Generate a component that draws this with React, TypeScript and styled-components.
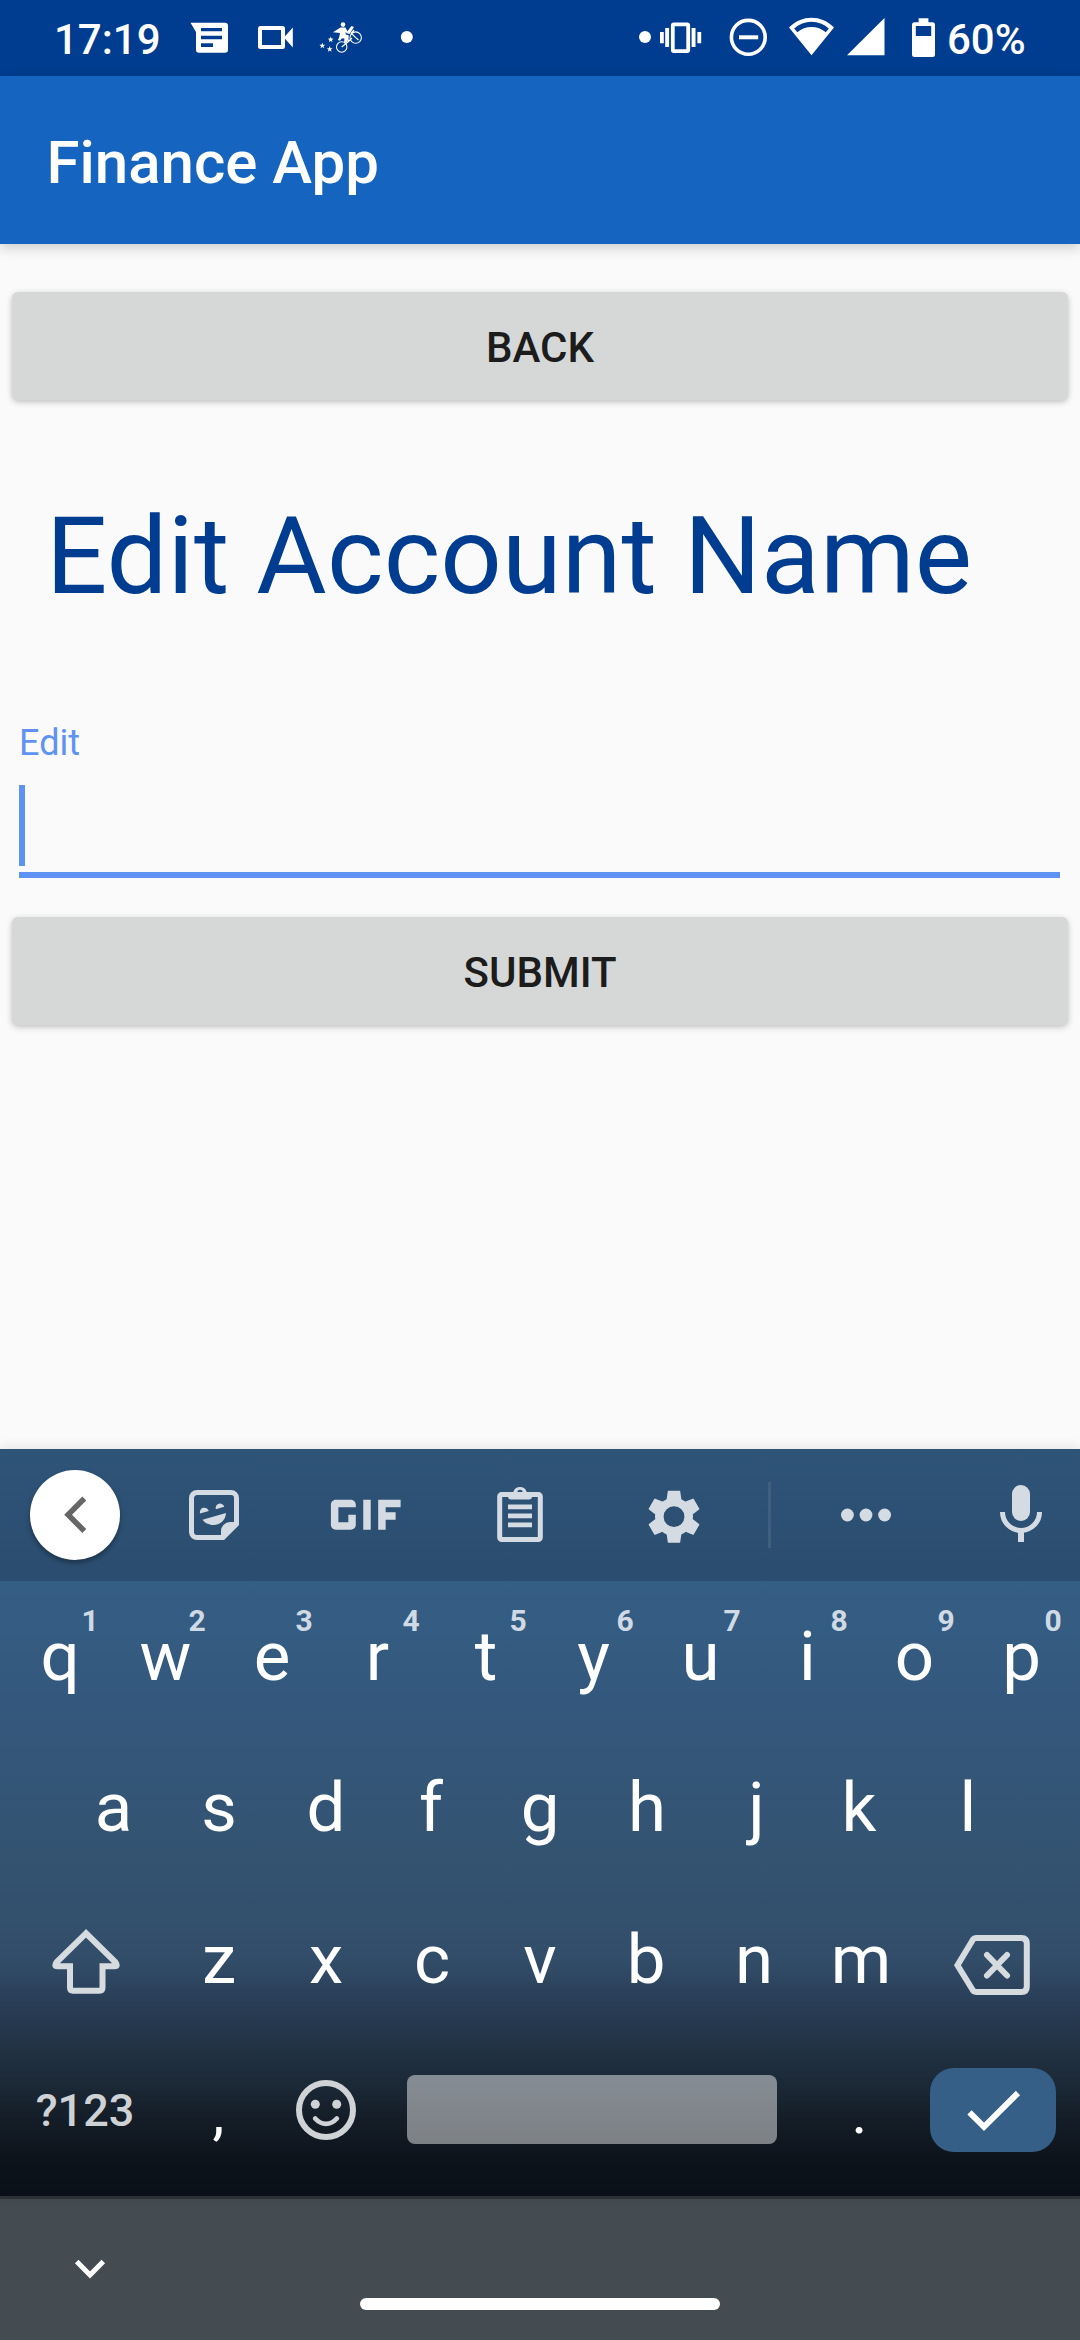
import React from "react";
import styled, { createGlobalStyle } from "styled-components";
import { MdGif } from "react-icons/md";

const GlobalStyle = createGlobalStyle`
  html, body { margin: 0; padding: 0; }
  body { font-family: Roboto, "Noto Sans", sans-serif; background: #fafafa; }
  *, *::before, *::after { box-sizing: border-box; }
  svg { display: block; flex: none; }
  button { font-family: inherit; border: 0; margin: 0; padding: 0; background: none; }
`;

const Screen = styled.div`
  display: flex;
  flex-direction: column;
  width: 1080px;
  height: 2340px;
  overflow: hidden;
  background: #fafafa;
`;

const StatusBar = styled.header`
  display: flex;
  justify-content: space-between;
  align-items: center;
  height: 76px;
  flex: none;
  padding: 0 54px;
  background: #003c8f;
  color: #fff;
`;

const StatusGroup = styled.div`
  display: flex;
  align-items: center;
  height: 76px;
`;

const StatusText = styled.span<{ $width: number }>`
  width: ${(p) => p.$width}px;
  padding-top: 3px;
  font-size: 42px;
  font-weight: 500;
  line-height: 50px;
  white-space: nowrap;
`;

const AppBar = styled.div`
  display: flex;
  align-items: center;
  flex: none;
  height: 168px;
  padding: 5px 46.5px 0;
  background: #1565c0;
  color: #fff;
  box-shadow: 0 4px 12px rgba(0, 0, 0, 0.18);
  z-index: 1;
`;

const AppTitle = styled.h1`
  margin: 0;
  font-size: 60px;
  font-weight: 500;
  line-height: 72px;
`;

const Content = styled.main`
  display: flex;
  flex-direction: column;
  flex: none;
  height: 1205px;
  padding: 48px 12px 0;
`;

const RaisedButton = styled.button`
  flex: none;
  height: 108px;
  padding-top: 3px;
  border-radius: 6px;
  background: #d6d8d7;
  box-shadow: 0 2px 6px rgba(0, 0, 0, 0.24);
  color: #1c1c1c;
  font-size: 42px;
  font-weight: 500;
  line-height: 50px;
`;

const Heading = styled.h2`
  margin: 92px 0 0;
  padding-left: 34px;
  color: #003c8f;
  font-size: 108px;
  font-weight: 400;
  line-height: 128px;
  letter-spacing: 0.14px;
  white-space: nowrap;
`;

const Field = styled.div`
  display: flex;
  flex-direction: column;
  margin: 102px 8px 39px 7px;
  height: 156px;
  border-bottom: 6px solid #5e92f3;
`;

const FieldLabel = styled.label`
  font-size: 36px;
  line-height: 42px;
  color: #5e92f3;
`;

const Caret = styled.span`
  width: 6px;
  height: 81px;
  margin-top: 21px;
  background: #5e92f3;
`;

const Keyboard = styled.section`
  display: flex;
  flex-direction: column;
  flex: none;
  height: 747px;
  box-shadow: 0 0 12px rgba(0, 0, 0, 0.12);
  z-index: 1;
`;

const Toolbar = styled.div`
  display: flex;
  align-items: center;
  height: 132px;
  flex: none;
  padding-left: 30px;
  background: linear-gradient(#2e5478, #2b4d6f);
  color: #d5dbe3;
`;

const CollapseButton = styled.button`
  display: flex;
  align-items: center;
  justify-content: center;
  width: 90px;
  height: 90px;
  margin-right: 65px;
  border-radius: 50%;
  background: #fff;
  box-shadow: 0 3px 5px rgba(0, 0, 0, 0.35);
`;

const ToolSlot = styled.div<{ $width: number; $lead?: number }>`
  display: flex;
  align-items: center;
  justify-content: center;
  height: 132px;
  width: ${(p) => p.$width}px;
  padding-left: ${(p) => p.$lead ?? 0}px;
`;

const ToolDivider = styled.div`
  width: 3px;
  height: 66px;
  background: #3f5f7d;
`;

const Keys = styled.div`
  display: flex;
  flex-direction: column;
  height: 615px;
  padding: 0 5px;
  background: linear-gradient(
    #355e85 0,
    #34587d 119px,
    #33526f 299px,
    #324d69 379px,
    #293d56 423px,
    #233447 459px,
    #1c2a38 499px,
    #141d27 539px,
    #0d131b 579px,
    #0a1017 615px
  );
`;

const KeyRow = styled.div<{ $height: number; $top?: number }>`
  display: flex;
  justify-content: center;
  align-items: center;
  flex: none;
  height: ${(p) => p.$height}px;
  padding-top: ${(p) => p.$top ?? 0}px;
`;

const LetterKey = styled.button<{ $nudge: number }>`
  position: relative;
  width: 107px;
  height: 100%;
  color: #fff;
  font-size: 69px;
  line-height: 80px;
  text-align: center;
  text-indent: ${(p) => p.$nudge * 2}px;
`;

const KeyHint = styled.sup`
  position: absolute;
  top: 22px;
  left: 70px;
  width: 30px;
  color: #d0dae5;
  font-size: 30px;
  font-weight: 700;
  line-height: 36px;
  text-align: center;
  text-indent: 0;
`;

const WideKey = styled.button<{ $pad: string }>`
  display: flex;
  align-items: center;
  justify-content: center;
  width: 160.5px;
  height: 100%;
  padding: ${(p) => p.$pad};
`;

const BottomRow = styled.div`
  display: flex;
  align-items: center;
  height: 161px;
  padding-bottom: 12px;
`;

const SymbolsKey = styled.button`
  width: 160px;
  padding-top: 2px;
  color: #cfd2d5;
  font-size: 45px;
  font-weight: 500;
  line-height: 54px;
`;

const PunctuationKey = styled.button`
  width: 107px;
  padding-top: 6px;
  color: #fff;
  font-size: 60px;
  line-height: 80px;
`;

const EmojiKey = styled.button`
  display: flex;
  justify-content: center;
  width: 107px;
`;

const SpaceKey = styled.button`
  width: 370px;
  height: 69px;
  margin: 0 29px 0 28px;
  border-radius: 8px;
  background: rgba(255, 255, 255, 0.46);
`;

const EnterKey = styled.button`
  display: flex;
  width: 126px;
  height: 84px;
  margin-left: 17px;
  border-radius: 24px;
  background: #355f87;
`;

const NavBar = styled.footer`
  display: flex;
  flex: none;
  height: 144px;
  border-top: 3px solid #2e3437;
  background: #454c51;
`;

const NavSide = styled.div`
  display: flex;
  width: 360px;
  padding: 50px 0 0 70px;
`;

const HomePill = styled.div`
  width: 360px;
  height: 12px;
  margin-top: 99px;
  border-radius: 6px;
  background: #fff;
`;

const starPoints = (cx: number, cy: number, r: number) =>
  Array.from({ length: 10 }, (_, i) => {
    const a = (Math.PI / 5) * i - Math.PI / 2;
    const d = i % 2 ? r * 0.42 : r;
    return `${cx + Math.cos(a) * d},${cy + Math.sin(a) * d}`;
  }).join(" ");

const NotificationIcons = () => (
  <svg width="240" height="76" viewBox="180 0 240 76" fill="#fff">
    <path
      fillRule="evenodd"
      d="M190.5 22.7H225a3 3 0 0 1 3 3V49.7a3 3 0 0 1-3 3H199a3 3 0 0 1-3-3V32ZM201 28v3.3h21V28ZM201 35.7v3.6h21v-3.6ZM201 43.3V47h12v-3.7Z"
    />
    <rect x="260" y="28" width="23" height="19" rx="0.5" fill="none" stroke="#fff" strokeWidth="4" />
    <path d="M284 37.5 292.8 27.5V47.5Z" />
    <circle cx="341.7" cy="47" r="5.2" fill="none" stroke="#fff" strokeWidth="1.1" />
    <circle cx="355.7" cy="37.6" r="5.7" fill="none" stroke="#fff" strokeWidth="1.1" />
    <circle cx="343" cy="24.6" r="2.3" />
    <path d="M340.5 27.5H345.5L348 32.5H345.5L345.8 34.5 349 35.5 347.2 42.5 344 43 344.4 38.5 339 38.2 340 33 333 32.3Z" />
    <path d="M346 33 351.5 26 354 27 349.5 34ZM350.5 33 353.5 29.5 354.5 30.8 351 35Z" />
    <path d="M341.7 47 348.5 41.5 347 35M348.5 41.5 352 38M355.7 37.6 351.5 33.5M355.7 37.6 358.5 40" fill="none" stroke="#fff" strokeWidth="1.2" />
    <path d="M339.5 37 337.8 40 340 40.8 342 38Z" />
    <polygon points={starPoints(322.3, 45.8, 3.1)} />
    <polygon points={starPoints(330.7, 39.6, 3.1)} />
    <polygon points={starPoints(329.7, 49.2, 3.1)} />
    <circle cx="406.8" cy="37" r="6" />
  </svg>
);

const SystemIcons = () => (
  <svg width="311" height="76" viewBox="636 0 311 76" fill="#fff">
    <circle cx="645" cy="37" r="6" />
    <rect x="672.8" y="24.3" width="15.4" height="26.8" rx="1" fill="none" stroke="#fff" strokeWidth="3.8" />
    <path d="M660 32h3.8v11.3H660ZM665.2 28h3.9v19h-3.9ZM691.6 28h3.9v19h-3.9ZM697.4 32h3.8v11.3h-3.8Z" />
    <circle cx="748.3" cy="37.3" r="16.9" fill="none" stroke="#fff" strokeWidth="3.6" />
    <path d="M739 35.3h19.2v4H739Z" />
    <path
      fillRule="evenodd"
      d="M811.5 55.3 789 27.6C795.5 21 803 17.7 811.5 17.7S827.5 21 834 27.6L811.5 55.3ZM797.3 32.2C801.5 28.9 806 27.1 811.5 27.1S821.5 28.9 825.8 32.2L828.8 28.4C823.8 24.1 818 21.7 811.5 21.7S799.2 24.1 794.2 28.4Z"
    />
    <path d="M847 55.3 884.5 18V55.3Z" />
    <path
      fillRule="evenodd"
      d="M918.6 18.3H928.4V22.3H932.5A2.5 2.5 0 0 1 935 24.8V54.5A2.5 2.5 0 0 1 932.5 57H914.5A2.5 2.5 0 0 1 912 54.5V24.8A2.5 2.5 0 0 1 914.5 22.3H918.6ZM915.8 26V36H931.2V26Z"
    />
  </svg>
);

const StickerIcon = () => (
  <svg width="50" height="50" viewBox="0 0 50 50" fill="currentColor">
    <path d="M8 2.500H42a5.500 5.500 0 0 1 5.500 5.500V34L34 47.500H8A5.500 5.500 0 0 1 2.500 42V8A5.500 5.500 0 0 1 8 2.500Z" fill="none" stroke="currentColor" strokeWidth="5" />
    <path d="M50 34.500 34.500 50H32V41a9 9 0 0 1 9-9H50Z" />
    <path d="M11 23.500A4.300 4.300 0 1 1 19.800 21ZM26.800 19.200A4.300 4.300 0 1 1 35.300 16.800ZM13.500 29.700 37 23C36.500 31 30.500 35 24.500 35 19.500 35 15.500 32.500 13.500 29.700Z" />
  </svg>
);

const ClipboardIcon = () => (
  <svg width="46" height="60" viewBox="0 0 46 60" fill="currentColor">
    <rect x="2.700" y="9.500" width="40.600" height="45" rx="2" fill="none" stroke="currentColor" strokeWidth="5" />
    <path fillRule="evenodd" d="M11 7H16.300a7 7 0 0 1 13.400 0H35V11.500a3 3 0 0 1-3 3H14a3 3 0 0 1-3-3ZM23 4.700a2.700 2.700 0 1 0 0 5.400 2.700 2.700 0 0 0 0-5.400Z" />
    <path d="M11 19.500h24v4.700H11ZM11 28.500h24v4.700H11ZM11 37.500h24v4.700H11Z" />
  </svg>
);

const GearIcon = () => (
  <svg width="54" height="56" viewBox="-27 -29.700 54 56" stroke="currentColor" strokeLinejoin="round">
    <circle r="14.700" fill="none" strokeWidth="8.600" />
    {[0, 60, 120, 180, 240, 300].map((a) => (
      <path key={a} transform={`rotate(${a})`} fill="currentColor" strokeWidth="1.500" d="M-5.500-25.200H5.500L6.600-17.500H-6.600Z" />
    ))}
  </svg>
);

const MoreIcon = () => (
  <svg width="52" height="14" viewBox="-26 -7 52 14" fill="currentColor">
    <circle cx="-18.600" r="6.400" />
    <circle r="6.400" />
    <circle cx="18.600" r="6.400" />
  </svg>
);

const MicIcon = () => (
  <svg width="42" height="60" viewBox="0 0 42 60" fill="none" stroke="currentColor">
    <rect x="12" y="0" width="18" height="36" rx="9" fill="currentColor" stroke="none" />
    <path d="M2.500 27A18.500 18.500 0 0 0 39.500 27" strokeWidth="5" />
    <path d="M21 45V57" strokeWidth="6" />
  </svg>
);

const ShiftIcon = () => (
  <svg width="70" height="68" viewBox="51 1928 70 68" fill="none" stroke="#d6dbe0" strokeWidth="6">
    <path d="M86 1933.300 56.500 1962.300Q53.500 1966.300 57.500 1966.300H70V1987.500Q70 1990.700 73 1990.700H99.500Q102.500 1990.700 102.500 1987.500V1966.300H114.500Q118.500 1966.300 115.500 1962.300Z" />
  </svg>
);

const BackspaceIcon = () => (
  <svg width="78" height="62" viewBox="953 1934 78 62" fill="none" stroke="#d6dbe0" strokeWidth="6">
    <path d="M976 1938H1021.500Q1026.800 1938 1026.800 1943.500V1986.500Q1026.800 1992 1021.500 1992H976Q974 1992 973 1990.500L957.500 1965.200 973 1939.500Q974 1938 976 1938Z" />
    <path d="M987 1955 1007 1975.500M1007 1955 987 1975.500" strokeLinecap="round" />
  </svg>
);

const EmojiIcon = () => (
  <svg width="62" height="62" viewBox="-31 -31 62 62" fill="none" stroke="#d0d3d6">
    <circle r="27" strokeWidth="6" />
    <circle cx="-10.700" cy="-5.700" r="4.500" fill="#d0d3d6" stroke="none" />
    <circle cx="10.700" cy="-5.700" r="4.500" fill="#d0d3d6" stroke="none" />
    <path d="M-10.800 8.500Q-6 13.800 0 13.800T10.800 8.500" strokeWidth="4.800" strokeLinecap="round" />
  </svg>
);

const numberRow = "qwertyuiop".split("");
const homeRow = "asdfghjkl".split("");
const lowerRow = "zxcvbnm".split("");

const opticalShift: Record<string, number> = {
  q: 1.5, e: -0.5, r: -2, t: -0.5, a: 1.5, f: -2, j: 2.5, k: -2, c: -1, b: -1,
};

const Letter = ({ char, hint }: { char: string; hint?: number }) => (
  <LetterKey $nudge={opticalShift[char] ?? 0}>
    {char}
    {hint !== undefined && <KeyHint>{hint}</KeyHint>}
  </LetterKey>
);

export default function App() {
  return (
    <Screen>
      <GlobalStyle />
      <StatusBar>
        <StatusGroup>
          <StatusText $width={126}>17:19</StatusText>
          <NotificationIcons />
        </StatusGroup>
        <StatusGroup>
          <SystemIcons />
          <StatusText $width={79}>60%</StatusText>
        </StatusGroup>
      </StatusBar>
      <AppBar>
        <AppTitle>Finance App</AppTitle>
      </AppBar>
      <Content>
        <RaisedButton>BACK</RaisedButton>
        <Heading>Edit Account Name</Heading>
        <Field>
          <FieldLabel>Edit</FieldLabel>
          <Caret />
        </Field>
        <RaisedButton>SUBMIT</RaisedButton>
      </Content>
      <Keyboard>
        <Toolbar>
          <CollapseButton aria-label="Collapse">
            <svg width="24" height="38" viewBox="-0.800 0 24 38" fill="none" stroke="#666" strokeWidth="5.500">
              <path d="M20.500 2.500 4.300 18.700 20.500 35" />
            </svg>
          </CollapseButton>
          <ToolSlot $width={58}><StickerIcon /></ToolSlot>
          <ToolSlot $width={246}><MdGif size={119.5} /></ToolSlot>
          <ToolSlot $width={62}><ClipboardIcon /></ToolSlot>
          <ToolSlot $width={217} $lead={29}><GearIcon /></ToolSlot>
          <ToolDivider />
          <ToolSlot $width={190}><MoreIcon /></ToolSlot>
          <ToolSlot $width={119}><MicIcon /></ToolSlot>
        </Toolbar>
        <Keys>
          <KeyRow $height={151}>
            {numberRow.map((k, i) => <Letter key={k} char={k} hint={(i + 1) % 10} />)}
          </KeyRow>
          <KeyRow $height={151}>
            {homeRow.map((k) => <Letter key={k} char={k} />)}
          </KeyRow>
          <KeyRow $height={152} $top={2}>
            <WideKey $pad="4px 0 0 1.5px" aria-label="Shift"><ShiftIcon /></WideKey>
            {lowerRow.map((k) => <Letter key={k} char={k} />)}
            <WideKey $pad="10px 5.5px 0 0" aria-label="Backspace"><BackspaceIcon /></WideKey>
          </KeyRow>
          <BottomRow>
            <SymbolsKey>?123</SymbolsKey>
            <PunctuationKey>,</PunctuationKey>
            <EmojiKey aria-label="Emoji"><EmojiIcon /></EmojiKey>
            <SpaceKey aria-label="Space" />
            <PunctuationKey>.</PunctuationKey>
            <EnterKey aria-label="Done">
              <svg width="126" height="84" viewBox="930 2067 126 84" fill="none" stroke="#fff" strokeWidth="6">
                <path d="M969.500 2111.300 984 2125.800 1018 2092" />
              </svg>
            </EnterKey>
          </BottomRow>
        </Keys>
      </Keyboard>
      <NavBar>
        <NavSide>
          <svg width="40" height="34" viewBox="70 2249 40 34" fill="none" stroke="#fff" strokeWidth="5">
            <path d="M76.700 2261.500 90 2275 103.300 2261.500" />
          </svg>
        </NavSide>
        <HomePill />
      </NavBar>
    </Screen>
  );
}
